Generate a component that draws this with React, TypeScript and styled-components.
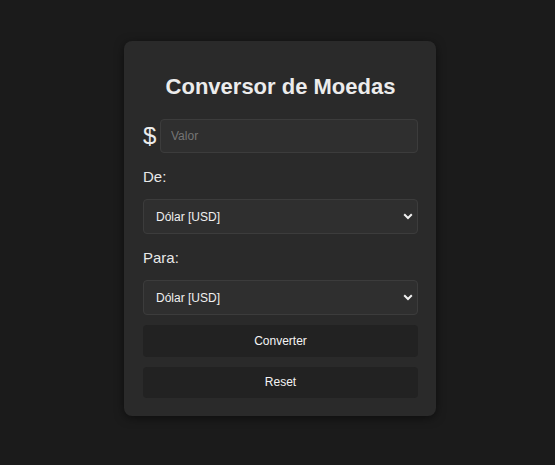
import React from 'react'
import styled, { createGlobalStyle } from 'styled-components'

const GlobalStyle = createGlobalStyle`
  html, body {
    margin: 0;
    padding: 0;
    background: #1b1b1b;
    font-family: "Liberation Sans", Arial, sans-serif;
    color: #e8e8e8;
  }
`

const currencies = ['Dólar [USD]', 'Real [BRL]', 'Euro [EUR]']

const App: React.FC = () => {
  return (
    <>
      <GlobalStyle />
      <Page>
        <Card>
          <Title>Conversor de Moedas</Title>
          <ValueRow>
            <Dollar>$</Dollar>
            <ValueInput placeholder="Valor" />
          </ValueRow>
          <Label>De:</Label>
          <CurrencySelect />
          <Label>Para:</Label>
          <CurrencySelect />
          <Button>Converter</Button>
          <Button>Reset</Button>
        </Card>
      </Page>
    </>
  )
}

const CurrencySelect: React.FC = () => (
  <SelectWrap>
    <Select defaultValue={currencies[0]}>
      {currencies.map((c) => (
        <option key={c}>{c}</option>
      ))}
    </Select>
    <Chevron width="10" height="7" viewBox="0 0 10 7">
      <path d="M1.2 1.3 L5 5 L8.8 1.3" fill="none" stroke="#f0f0f0" strokeWidth="2" />
    </Chevron>
  </SelectWrap>
)

export default App

const Page = styled.div`
  display: flex;
  justify-content: center;
  padding: 41px 0 0 5px;
  min-height: 465px;
  box-sizing: border-box;
`
const Card = styled.div`
  width: 312px;
  box-sizing: border-box;
  padding: 20px 18px 18px 19px;
  background: #2a2a2a;
  border-radius: 8px;
  box-shadow: 0 2px 10px rgba(0, 0, 0, 0.5);
  display: flex;
  flex-direction: column;
  height: 375px;
`
const Title = styled.h2`
  margin: 13px 0 0;
  height: 26px;
  line-height: 26px;
  font-size: 22px;
  font-weight: bold;
  text-align: center;
  color: #ececec;
`
const ValueRow = styled.div`
  display: flex;
  align-items: center;
  margin-top: 19px;
  gap: 5px;
`
const Dollar = styled.span`
  font-size: 24px;
  width: 12px;
  color: #ececec;
`
const ValueInput = styled.input`
  flex: 1;
  height: 34px;
  box-sizing: border-box;
  background: #2f2f2f;
  border: 1px solid #3c3c3c;
  border-radius: 4px;
  padding: 0 10px;
  font-family: "Liberation Sans", Arial, sans-serif;
  font-size: 12px;
  color: #e8e8e8;
  outline: none;
  ::placeholder {
    color: #777;
  }
`
const Label = styled.div`
  margin-top: 15px;
  height: 18px;
  line-height: 18px;
  font-size: 15px;
  color: #e8e8e8;
`
const SelectWrap = styled.div`
  position: relative;
  margin-top: 13px;
`
const Select = styled.select`
  appearance: none;
  width: 100%;
  height: 35px;
  box-sizing: border-box;
  background: #2f2f2f;
  border: 1px solid #3c3c3c;
  border-radius: 4px;
  padding: 0 12px;
  font-family: "Liberation Sans", Arial, sans-serif;
  font-size: 12px;
  color: #f0f0f0;
  outline: none;
`
const Chevron = styled.svg`
  position: absolute;
  right: 5px;
  top: 14px;
  pointer-events: none;
`
const Button = styled.button`
  margin-top: 10px;
  height: 32px;
  border: none;
  border-radius: 4px;
  background: #222;
  color: #f4f4f4;
  font-family: "Liberation Sans", Arial, sans-serif;
  font-size: 12px;
  cursor: pointer;
`
